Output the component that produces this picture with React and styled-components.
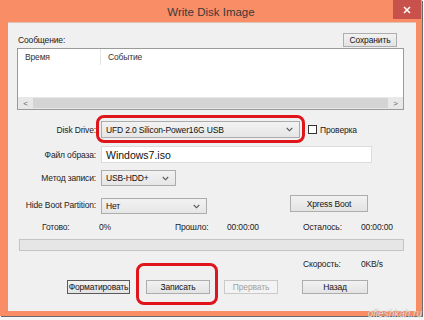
import React from 'react';
import styled, { createGlobalStyle } from 'styled-components';

const Global = createGlobalStyle`
  html, body { margin: 0; padding: 0; background: #f4f4f4; }
  body { font-family: "Liberation Sans", Arial, sans-serif; }
  * { box-sizing: border-box; }
`;

const Page = styled.div`
  position: relative;
  width: 424px;
  height: 320px;
  overflow: hidden;
  background: #f6f6f6;
`;

const Window = styled.div`
  width: 422px;
  height: 316px;
  background: #f88d66;
  display: flex;
  flex-direction: column;
  box-shadow: 1px 1px 0 #6a6a6a;
`;

const TitleBar = styled.div`
  height: 22px;
  display: grid;
  grid-template-columns: 1fr auto 1fr;
  align-items: start;
`;

const Title = styled.div`
  grid-column: 2;
  align-self: center;
  font-size: 11.5px;
  color: #3a3a3a;
  padding-top: 1px;
`;

const Close = styled.div`
  grid-column: 3;
  justify-self: end;
  width: 28px;
  height: 19px;
  margin-right: 1px;
  background: #c9514b;
  display: flex;
  align-items: center;
  justify-content: center;
`;

const Body = styled.div`
  flex: 1;
  display: flex;
  padding: 0 6px 5px 8px;
`;

const Client = styled.div`
  flex: 1;
  background: #f0f0f0;
  border-top: 1px solid #e2c2b4;
  padding: 9px 12px 0 9px;
  display: flex;
  flex-direction: column;
  font-size: 8.5px;
  letter-spacing: -0.15px;
  color: #1a1a1a;
`;

const TopRow = styled.div`
  height: 15px;
  display: flex;
  align-items: center;
  justify-content: space-between;
`;

const Label = styled.span`
  white-space: nowrap;
  color: ${p => (p.$muted ? '#a0a0a0' : '#1a1a1a')};
`;

const Button = styled.div`
  width: ${p => p.$w}px;
  height: ${p => p.$h || 14}px;
  margin-left: ${p => p.$ml || 0}px;
  margin-right: ${p => p.$mr || 0}px;
  display: flex;
  align-items: center;
  justify-content: center;
  white-space: nowrap;
  border: 1px solid ${p => (p.$disabled ? '#cacaca' : p.$focus ? '#5a5a5a' : '#adadad')};
  background: ${p => (p.$disabled ? '#f3f3f3' : 'linear-gradient(#f2f2f2, #e3e3e3)')};
  color: ${p => (p.$disabled ? '#a2a2a2' : '#151515')};
`;

const List = styled.div`
  margin-top: 1px;
  height: 62px;
  border: 1px solid #9a9a9a;
  background: #fff;
  display: flex;
  flex-direction: column;
`;

const ListHeader = styled.div`
  height: 16px;
  display: flex;
  color: #333;
`;

const HeaderCell = styled.div`
  width: ${p => (p.$w ? `${p.$w}px` : 'auto')};
  flex: ${p => (p.$w ? 'none' : 1)};
  padding-left: 7px;
  display: flex;
  align-items: center;
  border-right: ${p => (p.$w ? '1px solid #e5e5e5' : 'none')};
`;

const ListBody = styled.div`
  flex: 1;
`;

const HScroll = styled.div`
  height: 12px;
  display: flex;
  background: #e8e8e8;
`;

const ScrollArrow = styled.div`
  width: 15px;
  display: flex;
  align-items: center;
  justify-content: center;
  color: #606060;
  font-size: 8px;
`;

const ScrollThumb = styled.div`
  flex: 1;
  margin: 1px 0;
  background: #d4d4d4;
`;

const FormRow = styled.div`
  display: flex;
  align-items: ${p => p.$align || 'center'};
  margin-top: ${p => p.$mt}px;
`;

const FieldLabel = styled.div`
  width: 79px;
  margin-right: 5px;
  text-align: right;
  white-space: nowrap;
  align-self: center;
  color: #222;
`;

const Select = styled.div`
  width: ${p => p.$w}px;
  height: ${p => p.$h || 16}px;
  border: 1px solid #acacac;
  background: linear-gradient(#f2f2f2, #e6e6e6);
  display: flex;
  align-items: center;
  justify-content: space-between;
  padding: 0 6px 0 4px;
  color: #111;
`;

const Input = styled.div`
  width: ${p => p.$w}px;
  height: 17px;
  border: 1px solid #dcdcdc;
  background: #fff;
  display: flex;
  align-items: center;
  padding-left: 4px;
  font-size: 10.5px;
  letter-spacing: 0;
  color: #111;
`;

const Check = styled.div`
  width: 9px;
  height: 9px;
  margin: 0 3px 0 8px;
  border: 1px solid #333;
  background: #fff;
`;

const HighlightWrap = styled.div`
  position: relative;
  display: flex;
`;

const Ring = styled.div`
  position: absolute;
  top: -${p => p.$t}px;
  left: -${p => p.$l}px;
  right: -${p => p.$r}px;
  bottom: -${p => p.$b}px;
  border: 3px solid #e0141b;
  border-radius: 8px;
  pointer-events: none;
`;

const StatusGrid = styled.div`
  display: grid;
  grid-template-columns: 57px 76px 52px 76px 58px auto;
  margin: ${p => p.$mt}px 0 0 25px;
  height: 10px;
  align-items: center;
  color: #222;
`;

const Progress = styled.div`
  margin: 7px 0 0 2px;
  height: 12px;
  border: 1px solid #c4c4c4;
  background: #e6e6e6;
`;

const ButtonRow = styled.div`
  display: flex;
  margin-top: 11px;
`;

const Watermark = styled.div`
  position: absolute;
  right: 2px;
  bottom: 1px;
  font-size: 10px;
  font-style: italic;
  color: rgba(255, 255, 255, 0.75);
  text-shadow: 0 0 1px rgba(90, 90, 90, 0.6);
`;

const Chevron = () => (
  <svg width="7" height="5" viewBox="0 0 7 5">
    <path d="M0.8 1 L3.5 3.8 L6.2 1" fill="none" stroke="#555" strokeWidth="1.1" />
  </svg>
);

export default function App() {
  return (
    <Page>
      <Global />
      <Window>
        <TitleBar>
          <Title>Write Disk Image</Title>
          <Close>
            <svg width="8" height="8" viewBox="0 0 8 8">
              <path d="M1 1 L7 7 M7 1 L1 7" stroke="#fff" strokeWidth="1.5" />
            </svg>
          </Close>
        </TitleBar>
        <Body>
          <Client>
            <TopRow>
              <Label style={{ marginLeft: 1 }}>Сообщение:</Label>
              <Button $w={54} $mr={7}>Сохранить</Button>
            </TopRow>
            <List>
              <ListHeader>
                <HeaderCell $w={83}>Время</HeaderCell>
                <HeaderCell>Событие</HeaderCell>
              </ListHeader>
              <ListBody />
              <HScroll>
                <ScrollArrow>&lt;</ScrollArrow>
                <ScrollThumb />
                <ScrollArrow>&gt;</ScrollArrow>
              </HScroll>
            </List>

            <FormRow $mt={11}>
              <FieldLabel>Disk Drive:</FieldLabel>
              <HighlightWrap>
                <Select $w={199} $h={17}>
                  <span>UFD 2.0 Silicon-Power16G USB</span>
                  <Chevron />
                </Select>
                <Ring $t={6} $l={5} $r={5} $b={5} />
              </HighlightWrap>
              <Check />
              <Label>Проверка</Label>
            </FormRow>

            <FormRow $mt={8}>
              <FieldLabel>Файл образа:</FieldLabel>
              <Input $w={271}>Windows7.iso</Input>
            </FormRow>

            <FormRow $mt={7}>
              <FieldLabel>Метод записи:</FieldLabel>
              <Select $w={75}>
                <span>USB-HDD+</span>
                <Chevron />
              </Select>
            </FormRow>

            <FormRow $mt={9} $align="flex-end">
              <FieldLabel>Hide Boot Partition:</FieldLabel>
              <Select $w={106} style={{ marginTop: 3 }}>
                <span>Нет</span>
                <Chevron />
              </Select>
              <Button $w={78} $h={17} $ml={83} style={{ marginBottom: 1, alignSelf: 'flex-start' }}>
                Xpress Boot
              </Button>
            </FormRow>

            <StatusGrid $mt={8}>
              <span>Готово:</span>
              <span>0%</span>
              <span>Прошло:</span>
              <span>00:00:00</span>
              <span>Осталось:</span>
              <span>00:00:00</span>
            </StatusGrid>

            <Progress />

            <StatusGrid $mt={8}>
              <span style={{ gridColumn: 5 }}>Скорость:</span>
              <span>0KB/s</span>
            </StatusGrid>

            <ButtonRow>
              <Button $w={63} $ml={50} $focus>Форматировать</Button>
              <HighlightWrap>
                <Button $w={64} $ml={16}>Записать</Button>
                <Ring $t={17} $l={10} $r={8} $b={11} style={{ left: 6 }} />
              </HighlightWrap>
              <Button $w={54} $ml={14} $disabled>Прервать</Button>
              <Button $w={66} $ml={24}>Назад</Button>
            </ButtonRow>
          </Client>
        </Body>
      </Window>
      <Watermark>ofleshkah.ru</Watermark>
    </Page>
  );
}
